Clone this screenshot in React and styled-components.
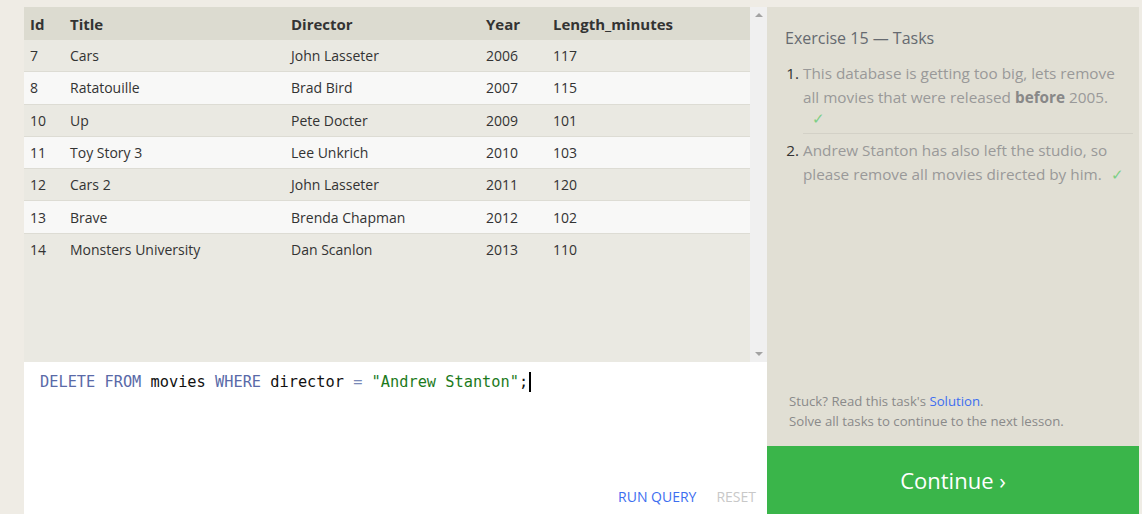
import styled, { createGlobalStyle } from "styled-components";

const GlobalStyle = createGlobalStyle`
    html, body {
        margin: 0;
        padding: 0;
        background: #efece5;
        font-family: "Open Sans", "Noto Sans", sans-serif;
    }
`;

const Page = styled.div`
    display: flex;
    padding: 7px 3px 0 24px;
    height: 514px;
    box-sizing: border-box;
`;

const LeftColumn = styled.div`
    display: flex;
    flex-direction: column;
    width: 743px;
`;

const TableArea = styled.div`
    display: flex;
    height: 355px;
    background: #eae9e2;
`;

const TableScroll = styled.div`
    flex: 1;
    overflow: hidden;
`;

const Table = styled.table`
    width: 100%;
    border-collapse: collapse;
    table-layout: fixed;
    font-size: 14px;
    color: #333;
    th {
        background: #dcdbd0;
        font-weight: 700;
        font-size: 15px;
        text-align: left;
        height: 33px;
        padding: 0 6px;
    }
    td {
        height: 31.3px;
        padding: 0 6px;
    }
    tbody tr + tr td {
        border-top: 1px solid #dddcd4;
    }
    tbody tr:nth-child(even) td {
        background: #f8f8f7;
    }
`;

const Scrollbar = styled.div`
    width: 17px;
    background: #f0f0f0;
    display: flex;
    flex-direction: column;
    justify-content: space-between;
    align-items: center;
    padding: 6px 0;
    box-sizing: border-box;
`;

const Arrow = styled.div`
    width: 0;
    height: 0;
    border-left: 4px solid transparent;
    border-right: 4px solid transparent;
    ${(p) => (p.$down ? "border-top: 4px solid #a3a3a3;" : "border-bottom: 4px solid #a3a3a3;")}
`;

const Editor = styled.div`
    flex: 1;
    background: #fff;
    display: flex;
    flex-direction: column;
    justify-content: space-between;
    padding: 10px 0 8px 16px;
`;

const Code = styled.div`
    font-family: "DejaVu Sans Mono", "Liberation Mono", monospace;
    font-size: 15.3px;
    color: #111;
    line-height: 20px;
`;

const Kw = styled.span`
    color: ${(p) => p.$color};
`;

const Caret = styled.span`
    display: inline-block;
    width: 2px;
    height: 20px;
    background: #000;
    vertical-align: top;
    margin-left: 1px;
`;

const Actions = styled.div`
    display: flex;
    justify-content: flex-end;
    gap: 20px;
    padding-right: 11px;
`;

const ActionButton = styled.span`
    font-size: 14px;
    color: ${(p) => (p.$disabled ? "#c8c8c8" : "#3d6ef0")};
`;

const RightPanel = styled.div`
    width: 372px;
    background: #e1dfd4;
    display: flex;
    flex-direction: column;
`;

const TaskBody = styled.div`
    flex: 1;
    padding: 20px 6px 0 18px;
    display: flex;
    flex-direction: column;
`;

const TaskTitle = styled.div`
    font-size: 16px;
    color: #666a70;
    margin: 0 0 12px 0;
`;

const TaskList = styled.ol`
    margin: 0;
    padding: 0 0 0 18px;
    font-size: 15.3px;
    line-height: 24px;
    color: #999;
    li::marker {
        color: #333;
    }
    li:first-child {
        padding: 0 10px 6px 0;
    }
    li + li {
        border-top: 1px solid #d3d1c7;
        padding-top: 4px;
    }
    b {
        color: #888;
    }
`;

const Check = styled.span`
    color: #7ccf86;
    margin-left: ${(p) => p.$gap}px;
    ${(p) => p.$block && "display: block; line-height: 18px;"}
`;

const Footer = styled.div`
    margin-top: auto;
    padding: 0 0 15px 4px;
    font-size: 13.2px;
    color: #8a8a8a;
    line-height: 20px;
    a {
        color: #3d6ef0;
        text-decoration: none;
    }
`;

const ContinueButton = styled.div`
    height: 68px;
    background: #3ab54a;
    color: #fff;
    font-size: 22px;
    display: flex;
    align-items: center;
    justify-content: center;
`;

const rows = [
    [7, "Cars", "John Lasseter", 2006, 117],
    [8, "Ratatouille", "Brad Bird", 2007, 115],
    [10, "Up", "Pete Docter", 2009, 101],
    [11, "Toy Story 3", "Lee Unkrich", 2010, 103],
    [12, "Cars 2", "John Lasseter", 2011, 120],
    [13, "Brave", "Brenda Chapman", 2012, 102],
    [14, "Monsters University", "Dan Scanlon", 2013, 110],
];

function App() {
    return (
        <Page>
            <GlobalStyle />
            <LeftColumn>
                <TableArea>
                    <TableScroll>
                        <Table>
                            <colgroup>
                                <col style={{ width: 40 }} />
                                <col style={{ width: 221 }} />
                                <col style={{ width: 195 }} />
                                <col style={{ width: 67 }} />
                                <col />
                            </colgroup>
                            <thead>
                                <tr>
                                    <th>Id</th>
                                    <th>Title</th>
                                    <th>Director</th>
                                    <th>Year</th>
                                    <th>Length_minutes</th>
                                </tr>
                            </thead>
                            <tbody>
                                {rows.map((r) => (
                                    <tr key={r[0]}>
                                        {r.map((c, i) => (
                                            <td key={i}>{c}</td>
                                        ))}
                                    </tr>
                                ))}
                            </tbody>
                        </Table>
                    </TableScroll>
                    <Scrollbar>
                        <Arrow />
                        <Arrow $down />
                    </Scrollbar>
                </TableArea>
                <Editor>
                    <Code>
                        <Kw $color="#5a6aa8">DELETE FROM</Kw> movies <Kw $color="#5a6aa8">WHERE</Kw> director{" "}
                        <Kw $color="#7a8ab8">=</Kw> <Kw $color="#1c7a1c">"Andrew Stanton"</Kw>;<Caret />
                    </Code>
                    <Actions>
                        <ActionButton>RUN QUERY</ActionButton>
                        <ActionButton $disabled>RESET</ActionButton>
                    </Actions>
                </Editor>
            </LeftColumn>
            <RightPanel>
                <TaskBody>
                    <TaskTitle>Exercise 15 — Tasks</TaskTitle>
                    <TaskList>
                        <li>
                            This database is getting too big, lets remove all movies that were released <b>before</b> 2005.
                            <Check $block $gap={9}>✓</Check>
                        </li>
                        <li>
                            Andrew Stanton has also left the studio, so please remove all movies directed by him.
                            <Check $gap={9}>✓</Check>
                        </li>
                    </TaskList>
                    <Footer>
                        Stuck? Read this task's <a>Solution</a>.
                        <br />
                        Solve all tasks to continue to the next lesson.
                    </Footer>
                </TaskBody>
                <ContinueButton>Continue ›</ContinueButton>
            </RightPanel>
        </Page>
    );
}

export default App;
